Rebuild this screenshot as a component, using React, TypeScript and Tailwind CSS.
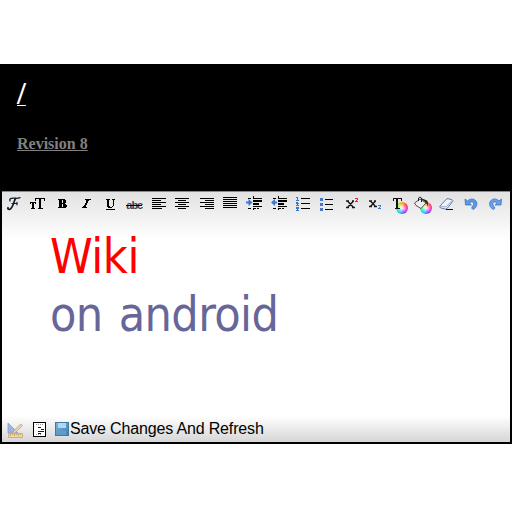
import React from "react";

type P = { children: React.ReactNode };
const Icon = ({ children }: P) => (
  <svg width="16" height="16" viewBox="0 0 16 16" className="block overflow-visible" shapeRendering="crispEdges">
    {children}
  </svg>
);

// Rows are [x, width] pairs drawn two pixels apart.
const Lines = ({ rows, y = 2 }: { rows: number[][]; y?: number }) => (
  <Icon>
    {rows.map(([x, w], i) => (
      <rect key={i} x={x} y={y + i * 2} width={w} height="1" fill="#000" />
    ))}
  </Icon>
);

const Glyph = ({ children, className }: { children: React.ReactNode; className: string }) => (
  <span className={"block w-4 h-4 text-center leading-4 whitespace-nowrap " + className}>{children}</span>
);

const Wheel = () => (
  <span className="absolute left-[5px] top-[6px] size-[12px] rounded-full bg-[radial-gradient(circle,#fff_0%,#ffffff00_65%),conic-gradient(#ff9f20,#ff3050,#ff20e0,#7040ff,#20c0ff,#20f080,#b0f020,#ff9f20)]" />
);

const Indent = ({ out = false }: { out?: boolean }) => (
  <Icon>
    <path d="M7 0h1v2H7zM7 13h1v1H7zM2 2h3v1H2zM7 2h9v1H7zM7 4h9v2H7zM7 7h6v2H7zM7 10h9v1H7zM2 12h3v1H2zM7 12h3v1H7zM11 12h2v1h-2z" fill="#000" />
    <path
      shapeRendering="auto"
      d={out ? "M0 6.5L4 3v2.5h2v2H4V10z" : "M6.5 6.5L2.5 3v2.5H0v2h2.5V10z"}
      fill="#3977d4"
    />
  </Icon>
);

const undoPath = "M2 3l.5 6h6L6.500 7.200C9 4.500 11.500 6.500 10.500 9L8.500 12l1.500 1.500C14 11.500 14.800 7.500 13 5 11 2.300 7 2.300 4.500 5z";

const icons: React.ReactNode[] = [
  <Icon>
    <g shapeRendering="auto" fill="none" stroke="#111a2c" strokeLinecap="round">
      <path d="M4 5C3 2.500 5 2 8 2.200C11 2.500 12 2.500 14 1.700" strokeWidth="1.300" />
      <path d="M9.500 2.500C7.500 6 7 12.500 3.500 13.300C2 13.500 1.500 12.500 2 11.700" strokeWidth="1.700" />
      <path d="M6 7.500h5M11 6.300v2.500" strokeWidth="1.200" />
    </g>
  </Icon>,
  <Icon>
    <path d="M5 2h10v3h-1V3h-3v9h2v1H8v-1h1V3H6v2H5zM0 6h6v2H5V7H4v5h1v1H1v-1h1V7H1v1H0z" fill="#000" />
  </Icon>,
  <Icon>
    <path fillRule="evenodd" d="M4 3h7v1h1v3h-1v1h1v1h1v2h-1v1H4v-1h1V4H4zM8 4v3h1V4zM8 8v3h1V8z" fill="#000" />
  </Icon>,
  <Icon>
    <path d="M7 3h6v1h-2v1h-1v2H9v2H8v2h1v1H4v-1h1v-1h1V9h1V7h1V4H7z" fill="#000" />
  </Icon>,
  <Icon>
    <path d="M4 3h4v1H7v6h1v1h2v-1h1V4h-1V3h3v1h-1v6h-1v1h-1v1H6v-1H5V4H4zM4 13h9v1H4z" fill="#000" />
  </Icon>,
  <span className="relative block w-4 h-4">
    <Glyph className="font-['Liberation_Sans'] text-[11px] leading-[19px] font-bold tracking-[-1px] text-[#3b4655]">abc</Glyph>
    <span className="absolute left-0 top-[9px] h-px w-4 bg-black" />
  </span>,
  <Lines rows={[[2, 14], [2, 9], [2, 14], [2, 9], [2, 14], [2, 10]]} />,
  <Lines rows={[[1, 14], [4, 8], [1, 14], [4, 8], [1, 14], [4, 8]]} />,
  <Lines rows={[[2, 14], [7, 9], [2, 14], [7, 9], [2, 14], [7, 9]]} />,
  <Lines y={1} rows={[[1, 14], [1, 14], [1, 14], [1, 14], [1, 14], [1, 14]]} />,
  <Indent />,
  <Indent out />,
  <Icon>
    <path d="M6 2h9v1H6zM6 7h9v1H6zM6 12h9v1H6z" fill="#000" />
    <path d="M1 1h2v3h1v1H1V4h1V2H1zM1 6h2v1h1v1H3v1h1v1H1V9h1V8H1zM1 11h3v2H3v1h1v1H1v-1h1v-1H1z" fill="#3977c7" />
  </Icon>,
  <Icon>
    <path d="M6 3h8v1H6zM6 8h8v1H6zM6 13h8v1H6z" fill="#000" />
    <path d="M1 2h3v3H1zM1 7h3v3H1zM1 12h3v3H1z" fill="#4779c2" />
  </Icon>,
  <Icon>
    <path shapeRendering="auto" d="M4.500 5l6 6.500M10.500 5l-6 6.500M3 5h3M9 5h2M3 11.500h3M9 11.500h3" stroke="#17191e" strokeWidth="1.500" />
    <path d="M12 2h3v2h-1v1h1v1h-3V5h1V4h1V3h-2z" fill="#c92c34" />
  </Icon>,
  <Icon>
    <path shapeRendering="auto" d="M3.500 5l5 5.500M8.500 5l-5 5.500M2 5h3M7 5h2M2 10.500h3M7 10.500h3" stroke="#17191e" strokeWidth="1.400" />
    <path d="M11 9h3v2h-1v1h1v1h-3v-1h1v-1h1v-1h-2z" fill="#3c79ca" />
  </Icon>,
  <span className="relative block size-4">
    <Wheel />
    <svg className="relative overflow-visible" width="16" height="16" shapeRendering="crispEdges"><path d="M2 2h9v3h-1V3H7v9h2v1H4v-1h1V3H3v2H2z" fill="#111" /></svg>
  </span>,
  <span className="relative block size-4">
    <Wheel />
    <svg className="relative overflow-visible" width="16" height="16">
      <path d="M-.5 7L5 3l6 4-5 5.500-5-3z" fill="#ededed" stroke="#444" strokeWidth=".9" />
      <path d="M3.500 5V2q1.500-2 3 0v4" fill="none" stroke="#222" />
      <path d="M7 2.500l5 2 1 2-.5 4-1.500-4-4-3z" fill="#222" />
    </svg>
  </span>,
  <Icon>
    <g shapeRendering="auto">
      <path d="M1 10L7 3.500q1-1 2-.8l4 1q1.500.8.500 2L8 12.500q-1 1-2 .5l-4-1q-2-.5-1-2z" fill="#edf3fb" stroke="#657997" />
      <path d="M1.500 10l4.500 1q1 .2 2-1l5.500-6" fill="none" stroke="#9db1cf" />
      <path d="M7 13.500h7" stroke="#111" />
    </g>
  </Icon>,
  <Icon>
    <path shapeRendering="auto" d={undoPath} fill="#5d98e6" stroke="#3467bc" strokeWidth=".7" />
  </Icon>,
  <Icon>
    <path shapeRendering="auto" transform="translate(16.500 0) scale(-1 1)" d={undoPath} fill="#68a0ea" stroke="#3467bc" strokeWidth=".7" />
  </Icon>,
];

export default function App() {
  return (
    <div className="h-[512px] w-[512px] bg-white pt-16 overflow-hidden">
      <main className="flex h-[380px] flex-col bg-black">
        <header className="h-[127px] pl-[17px] pt-[12px] font-['Liberation_Serif',serif]">
          <a className="block h-[34px] w-fit text-[32px] leading-[34px] font-bold text-white underline decoration-1 underline-offset-[1px]">/</a>
          <a className="mt-[25px] block w-fit text-[16px] leading-[18px] font-bold text-[#808080] underline decoration-1 underline-offset-[1px]">Revision 8</a>
        </header>
        <section className="ml-[2px] mr-[2px] flex h-[251px] flex-col border-t border-[#8a8a8a] bg-white">
          <div className="h-[48px] shrink-0 bg-linear-to-b from-[#e2e2e2] to-white pt-1">
            <div className="grid w-[505px] grid-cols-21">
              {icons.map((icon, i) => (
                <button key={i} className="flex justify-center">{icon}</button>
              ))}
            </div>
          </div>
          <div className="-mt-[13px] h-[207px] pl-[48px] font-['DejaVu_Sans_Condensed','DejaVu_Sans',sans-serif] text-[48px] leading-[58px]">
            <p className="tracking-[-0.400px] text-[#ff0000]">Wiki</p>
            <p className="tracking-[-0.600px] [word-spacing:3px] text-[#666699]">on android</p>
          </div>
          <footer className="mt-auto flex h-[26px] shrink-0 items-center bg-linear-to-b from-white to-[#d6d6d6] pl-[5px] font-['Liberation_Sans',sans-serif]">
            <svg width="17" height="17" className="mt-[3px]">
              <path fillRule="evenodd" d="M1 1l10 10H1zM3.500 6v3h3z" fill="#a3b7e4" stroke="#8298cc" strokeWidth=".8" />
              <path d="M5 11L13.500 2l2 1.500L8 11z" fill="#e9d3b0" stroke="#b9a58a" strokeWidth=".8" />
              <path d="M1.500 11.500h14v4h-14z" fill="#eed9a2" stroke="#cfae72" />
              <path d="M3.500 12v2m2-2v1m2-1v2m2-1v-1m2 0v2m2-2v1" stroke="#bd9a60" strokeWidth=".8" />
            </svg>
            <svg width="13" height="15" className="ml-[9px] mt-[1px]" shapeRendering="crispEdges">
              <path d="M.5.5h12v14H.5z" fill="#fff" stroke="#000" />
              <path d="M3 2.500h1M5 2.500h1M7 2.500h1M9 2.500h1M3 12.500h1M5 12.500h1M7 12.500h1" stroke="#999" />
              <path d="M5 5.500h3M8 7.500h3M5 9.500h3M8 9.500h3M5 11.500h3" stroke="#11116b" />
            </svg>
            <svg width="16" height="16" className="ml-2 -mt-px">
              <defs><linearGradient id="disk" x2="1" y2="1"><stop stopColor="#79b6dc" /><stop offset="1" stopColor="#3e80b8" /></linearGradient></defs>
              <rect x="1.500" y="1.500" width="13" height="13" fill="url(#disk)" stroke="#3f79a8" />
              <path d="M4 2h8v5H4z" fill="#b5d7ec" /><path d="M5 10h7v4H5z" fill="#5f9bc7" />
            </svg>
            <span className="text-[16px] leading-5 tracking-[-0.160px]">Save Changes And Refresh</span>
          </footer>
        </section>
      </main>
    </div>
  );
}
